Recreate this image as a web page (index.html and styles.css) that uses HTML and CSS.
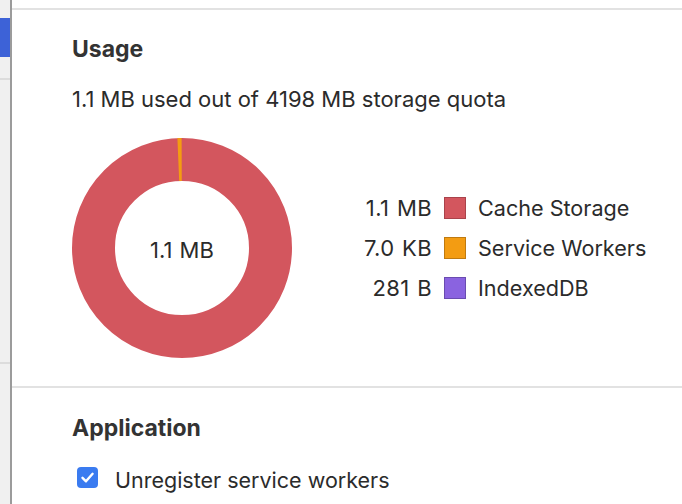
FILE: index.html
```html
<!DOCTYPE html>
<html lang="en">
<head>
<meta charset="utf-8">
<title>Clear storage</title>
<link rel="stylesheet" href="styles.css">
</head>
<body>
<div class="layout">
  <aside class="sidebar">
    <div class="side-gap-top"></div>
    <div class="side-selected"></div>
    <div class="side-gap-mid"></div>
    <div class="side-line"></div>
    <div class="side-gap-low"></div>
    <div class="side-line"></div>
  </aside>
  <main class="main">
    <section class="section usage">
      <h2 class="title">Usage</h2>
      <p class="quota">1.1 MB used out of 4198 MB storage quota</p>
      <div class="chart-row">
        <div class="donut">
          <svg class="donut-svg" width="220" height="220" viewBox="0 0 220 220">
            <circle cx="110" cy="110" r="88.5" fill="none" stroke="#d3565e" stroke-width="43"/>
            <path d="M105.39 0.10 A110 110 0 0 1 109.62 0 L109.77 43 A67 67 0 0 0 107.19 43.06 Z" fill="#f39c12"/>
          </svg>
          <span class="donut-label">1.1 MB</span>
        </div>
        <div class="legend">
          <span class="legend-value">1.1 MB</span>
          <span class="swatch swatch-cache"></span>
          <span class="legend-name">Cache Storage</span>
          <span class="legend-value">7.0 KB</span>
          <span class="swatch swatch-sw"></span>
          <span class="legend-name">Service Workers</span>
          <span class="legend-value">281 B</span>
          <span class="swatch swatch-idb"></span>
          <span class="legend-name">IndexedDB</span>
        </div>
      </div>
    </section>
    <section class="section application">
      <h2 class="title">Application</h2>
      <label class="check-row">
        <span class="checkbox">
          <svg width="21" height="21" viewBox="0 0 21 21"><path d="M5.5 10.8 L9 14.3 L15.6 6.8" fill="none" stroke="#fff" stroke-width="2.4" stroke-linecap="round" stroke-linejoin="round"/></svg>
        </span>
        <span class="check-label">Unregister service workers</span>
      </label>
    </section>
  </main>
</div>
</body>
</html>
```
FILE: styles.css
```css
* { box-sizing: border-box; }
html, body { margin: 0; padding: 0; background: #fff; }
body {
  font-family: Inter, "Liberation Sans", sans-serif;
  color: #2b2b2b;
  width: 682px;
  height: 504px;
  overflow: hidden;
}
.layout { display: flex; height: 504px; }
.sidebar {
  background: #f0f0f0;
  border-right: 2px solid #9b9b9b;
  flex: 0 0 12px;
  display: flex;
  flex-direction: column;
}
.side-gap-top { height: 18px; }
.side-selected { height: 39px; background: #3d62d7; }
.side-gap-mid { height: 21px; }
.side-line { height: 2px; background: #dcdcdc; }
.side-gap-low { height: 282px; }
.main {
  flex: 1;
  padding-top: 8px;
}
.section {
  border-top: 2px solid #e2e2e2;
  padding-left: 60px;
}
.usage { padding-top: 26px; padding-bottom: 28px; }
.application { padding-top: 27px; }
.title {
  margin: 0;
  font-size: 23px;
  line-height: 26px;
  font-weight: 700;
  color: #333;
}
.quota {
  margin: 24px 0 0;
  font-size: 22px;
  line-height: 26px;
}
.chart-row {
  display: flex;
  align-items: center;
  margin-top: 26px;
}
.donut {
  position: relative;
  width: 220px;
  height: 220px;
}
.donut-svg { display: block; }
.donut-label {
  position: absolute;
  left: 0;
  right: 0;
  top: 99px;
  text-align: center;
  font-size: 22px;
  line-height: 26px;
  word-spacing: 1px;
}
.legend {
  display: grid;
  grid-template-columns: 72px 22px auto;
  column-gap: 12px;
  row-gap: 14px;
  align-items: center;
  margin-left: 68px;
  font-size: 22px;
  line-height: 26px;
}
.legend-value { text-align: right; white-space: nowrap; word-spacing: 1px; letter-spacing: 0.4px; }
.legend-name { font-size: 21.6px; }
.swatch {
  width: 22px;
  height: 22px;
  border: 1.5px solid;
}
.swatch-cache { background: #d3565e; border-color: #a9434b; }
.swatch-sw { background: #f39c12; border-color: #bf7a10; }
.swatch-idb { background: #8a63e0; border-color: #6a4cb0; }
.check-row {
  display: flex;
  align-items: flex-start;
  margin-top: 26px;
  margin-left: 5px;
}
.checkbox {
  width: 21px;
  height: 21px;
  border-radius: 4px;
  background: #3a7bf0;
  display: block;
}
.checkbox svg { display: block; }
.check-label {
  margin-left: 17px;
  font-size: 21.5px;
  line-height: 26px;
}
```
